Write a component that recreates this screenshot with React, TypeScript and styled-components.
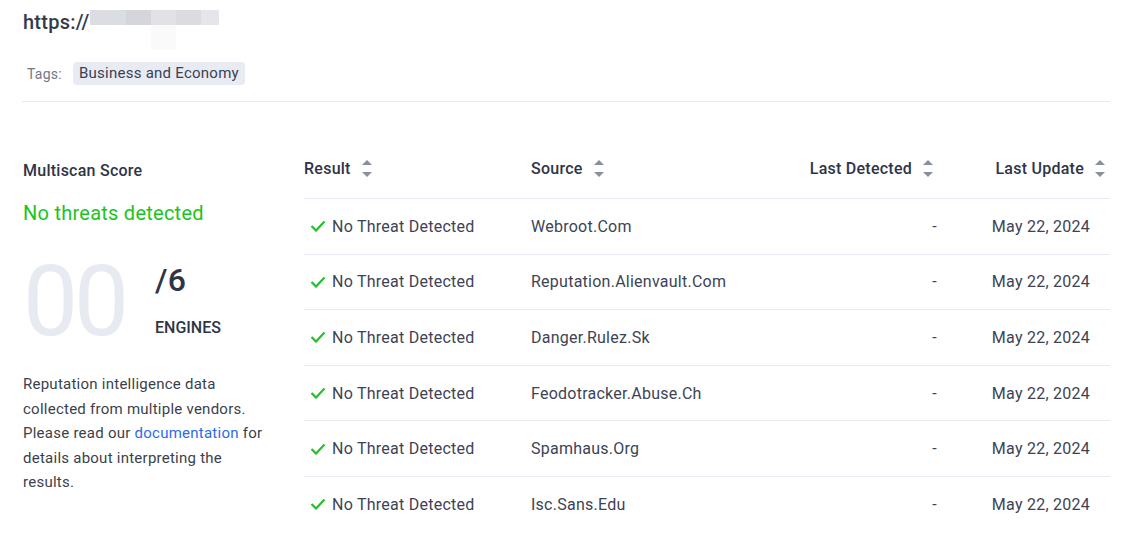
import styled, { createGlobalStyle } from 'styled-components';

const GlobalStyle = createGlobalStyle`
	body {
		margin: 0;
		background: #fff;
		font-family: Roboto, "Noto Sans", Arial, sans-serif;
		color: #363b4e;
		letter-spacing: 0.25px;
	}
`;

type Row = { source: string; detected: string; updated: string };

const rows: Row[] = [
	{ source: 'Webroot.Com', detected: '-', updated: 'May 22, 2024' },
	{ source: 'Reputation.Alienvault.Com', detected: '-', updated: 'May 22, 2024' },
	{ source: 'Danger.Rulez.Sk', detected: '-', updated: 'May 22, 2024' },
	{ source: 'Feodotracker.Abuse.Ch', detected: '-', updated: 'May 22, 2024' },
	{ source: 'Spamhaus.Org', detected: '-', updated: 'May 22, 2024' },
	{ source: 'Isc.Sans.Edu', detected: '-', updated: 'May 22, 2024' },
];

// pixelated blur over the hidden domain
const blurBlocks = [
	{ w: 11, c: '#dcdce2' },
	{ w: 25, c: '#dadde2' },
	{ w: 25, c: '#d5d6dc' },
	{ w: 25, c: '#e2e1e6', tail: true },
	{ w: 25, c: '#dcdbe0' },
	{ w: 18, c: '#e6e6ea' },
];

const SortIcon = (): JSX.Element => (
	<SortSvg width="10" height="18" viewBox="0 0 10 18">
		<path d="M5 0 L10 5 L0 5 Z" fill="#8a8f9e" />
		<path d="M0 12 L10 12 L5 17 Z" fill="#8a8f9e" />
	</SortSvg>
);

const Check = (): JSX.Element => (
	<svg width="16" height="12" viewBox="0 0 16 12">
		<polyline points="1.5,6 6,10.5 14.5,1.5" fill="none" stroke="#22c02a" strokeWidth="2.2" />
	</svg>
);

const App = (): JSX.Element => {
	return (
		<>
			<GlobalStyle />
			<Page>
				<Url>
					https://
					<Blur>
						{blurBlocks.map((b, i) => (
							<BlurCell key={i} w={b.w} c={b.c}>
								{b.tail && <BlurTail />}
							</BlurCell>
						))}
					</Blur>
				</Url>
				<Tags>
					<TagLabel>Tags:</TagLabel>
					<Chip>Business and Economy</Chip>
				</Tags>
				<Divider />
				<Main>
					<Summary>
						<SummaryTitle>Multiscan Score</SummaryTitle>
						<Status>No threats detected</Status>
						<Score>
							<BigNumber>00</BigNumber>
							<Engines>
								<Total>/6</Total>
								<EnginesLabel>ENGINES</EnginesLabel>
							</Engines>
						</Score>
						<Description>
							Reputation intelligence data collected from multiple vendors. Please read our{' '}
							<DocLink href="#">documentation</DocLink> for details about interpreting the results.
						</Description>
					</Summary>
					<Table>
						<HeadCell>Result<SortIcon /></HeadCell>
						<HeadCell>Source<SortIcon /></HeadCell>
						<HeadCell align="right" pad={12}>Last Detected<SortIcon /></HeadCell>
						<HeadCell align="right" pad={5}>Last Update<SortIcon /></HeadCell>
						{rows.map((r) => (
							<TableRow key={r.source}>
								<ResultCell><Check />No Threat Detected</ResultCell>
								<Cell>{r.source}</Cell>
								<Cell align="right" pad={8}>{r.detected}</Cell>
								<Cell align="right" pad={20}>{r.updated}</Cell>
							</TableRow>
						))}
					</Table>
				</Main>
			</Page>
		</>
	);
};

const Page = styled.div`
	width: 1088px;
	padding: 10px 0 0 22px;
`;

const Url = styled.div`
	display: flex;
	align-items: flex-start;
	font-size: 20px;
	font-weight: 500;
	line-height: 24px;
	color: #333a4d;
	padding-left: 1px;
`;

const Blur = styled.div`
	display: flex;
	height: 15px;
`;

const BlurCell = styled.div<{ w: number; c: string }>`
	position: relative;
	width: ${({ w }): number => w}px;
	height: 15px;
	background: ${({ c }): string => c};
`;

const BlurTail = styled.div`
	position: absolute;
	top: 15px;
	left: 0;
	width: 25px;
	height: 25px;
	background: #fafafa;
`;

const Tags = styled.div`
	display: flex;
	align-items: center;
	gap: 11px;
	margin-top: 28px;
	padding-left: 5px;
`;

const TagLabel = styled.span`
	font-size: 14px;
	color: #737887;
`;

const Chip = styled.span`
	background: #e9ebf3;
	border-radius: 4px;
	padding: 0 6px;
	height: 23px;
	line-height: 23px;
	font-size: 15px;
	color: #3a3f55;
`;

const Divider = styled.div`
	margin-top: 16px;
	border-top: 1px solid #e8e9ef;
`;

const Main = styled.div`
	display: grid;
	grid-template-columns: 282px 806px;
	margin-top: 36px;
`;

const Summary = styled.div`
	padding: 22px 0 0 1px;
`;

const SummaryTitle = styled.div`
	font-size: 16px;
	font-weight: 500;
	line-height: 22px;
	color: #2f3447;
`;

const Status = styled.div`
	margin-top: 19px;
	font-size: 20px;
	line-height: 24px;
	color: #1cc41c;
`;

const Score = styled.div`
	display: flex;
	align-items: flex-start;
	margin-top: 22px;
`;

const BigNumber = styled.div`
	font-size: 98px;
	line-height: 110px;
	color: #e8eaf1;
	letter-spacing: -4px;
	width: 132px;
`;

const Engines = styled.div`
	display: flex;
	flex-direction: column;
	padding-top: 14px;
`;

const Total = styled.div`
	font-size: 32px;
	font-weight: 500;
	line-height: 38px;
	color: #2f3447;
`;

const EnginesLabel = styled.div`
	margin-top: 19px;
	font-size: 16px;
	font-weight: 500;
	color: #2f3447;
	letter-spacing: 0;
`;

const Description = styled.p`
	margin: 15px 0 0;
	width: 240px;
	font-size: 15px;
	line-height: 24.5px;
	color: #3b3f4c;
`;

const DocLink = styled.a`
	color: #2b6be8;
	text-decoration: none;
`;

const Table = styled.div`
	display: grid;
	grid-template-columns: 227px 229px 185px 165px;
`;

const HeadCell = styled.div<{ align?: 'right'; pad?: number }>`
	display: flex;
	align-items: center;
	justify-content: ${({ align }): string => (align === 'right' ? 'flex-end' : 'flex-start')};
	gap: 11px;
	height: 60px;
	padding-right: ${({ pad }): number => pad ?? 0}px;
	font-size: 16px;
	font-weight: 500;
	color: #2f3447;
`;

const SortSvg = styled.svg`
	flex-shrink: 0;
	margin-top: 1px;
`;

const TableRow = styled.div`
	display: contents;
`;

const Cell = styled.div<{ align?: 'right'; pad?: number }>`
	display: flex;
	align-items: center;
	justify-content: ${({ align }): string => (align === 'right' ? 'flex-end' : 'flex-start')};
	height: 55.6px;
	box-sizing: border-box;
	border-top: 1px solid #e8e9f2;
	padding-right: ${({ pad }): number => pad ?? 0}px;
	font-size: 16px;
	color: #3e4354;
`;

const ResultCell = styled(Cell)`
	gap: 6px;
	padding-left: 6px;
`;

export default App;
